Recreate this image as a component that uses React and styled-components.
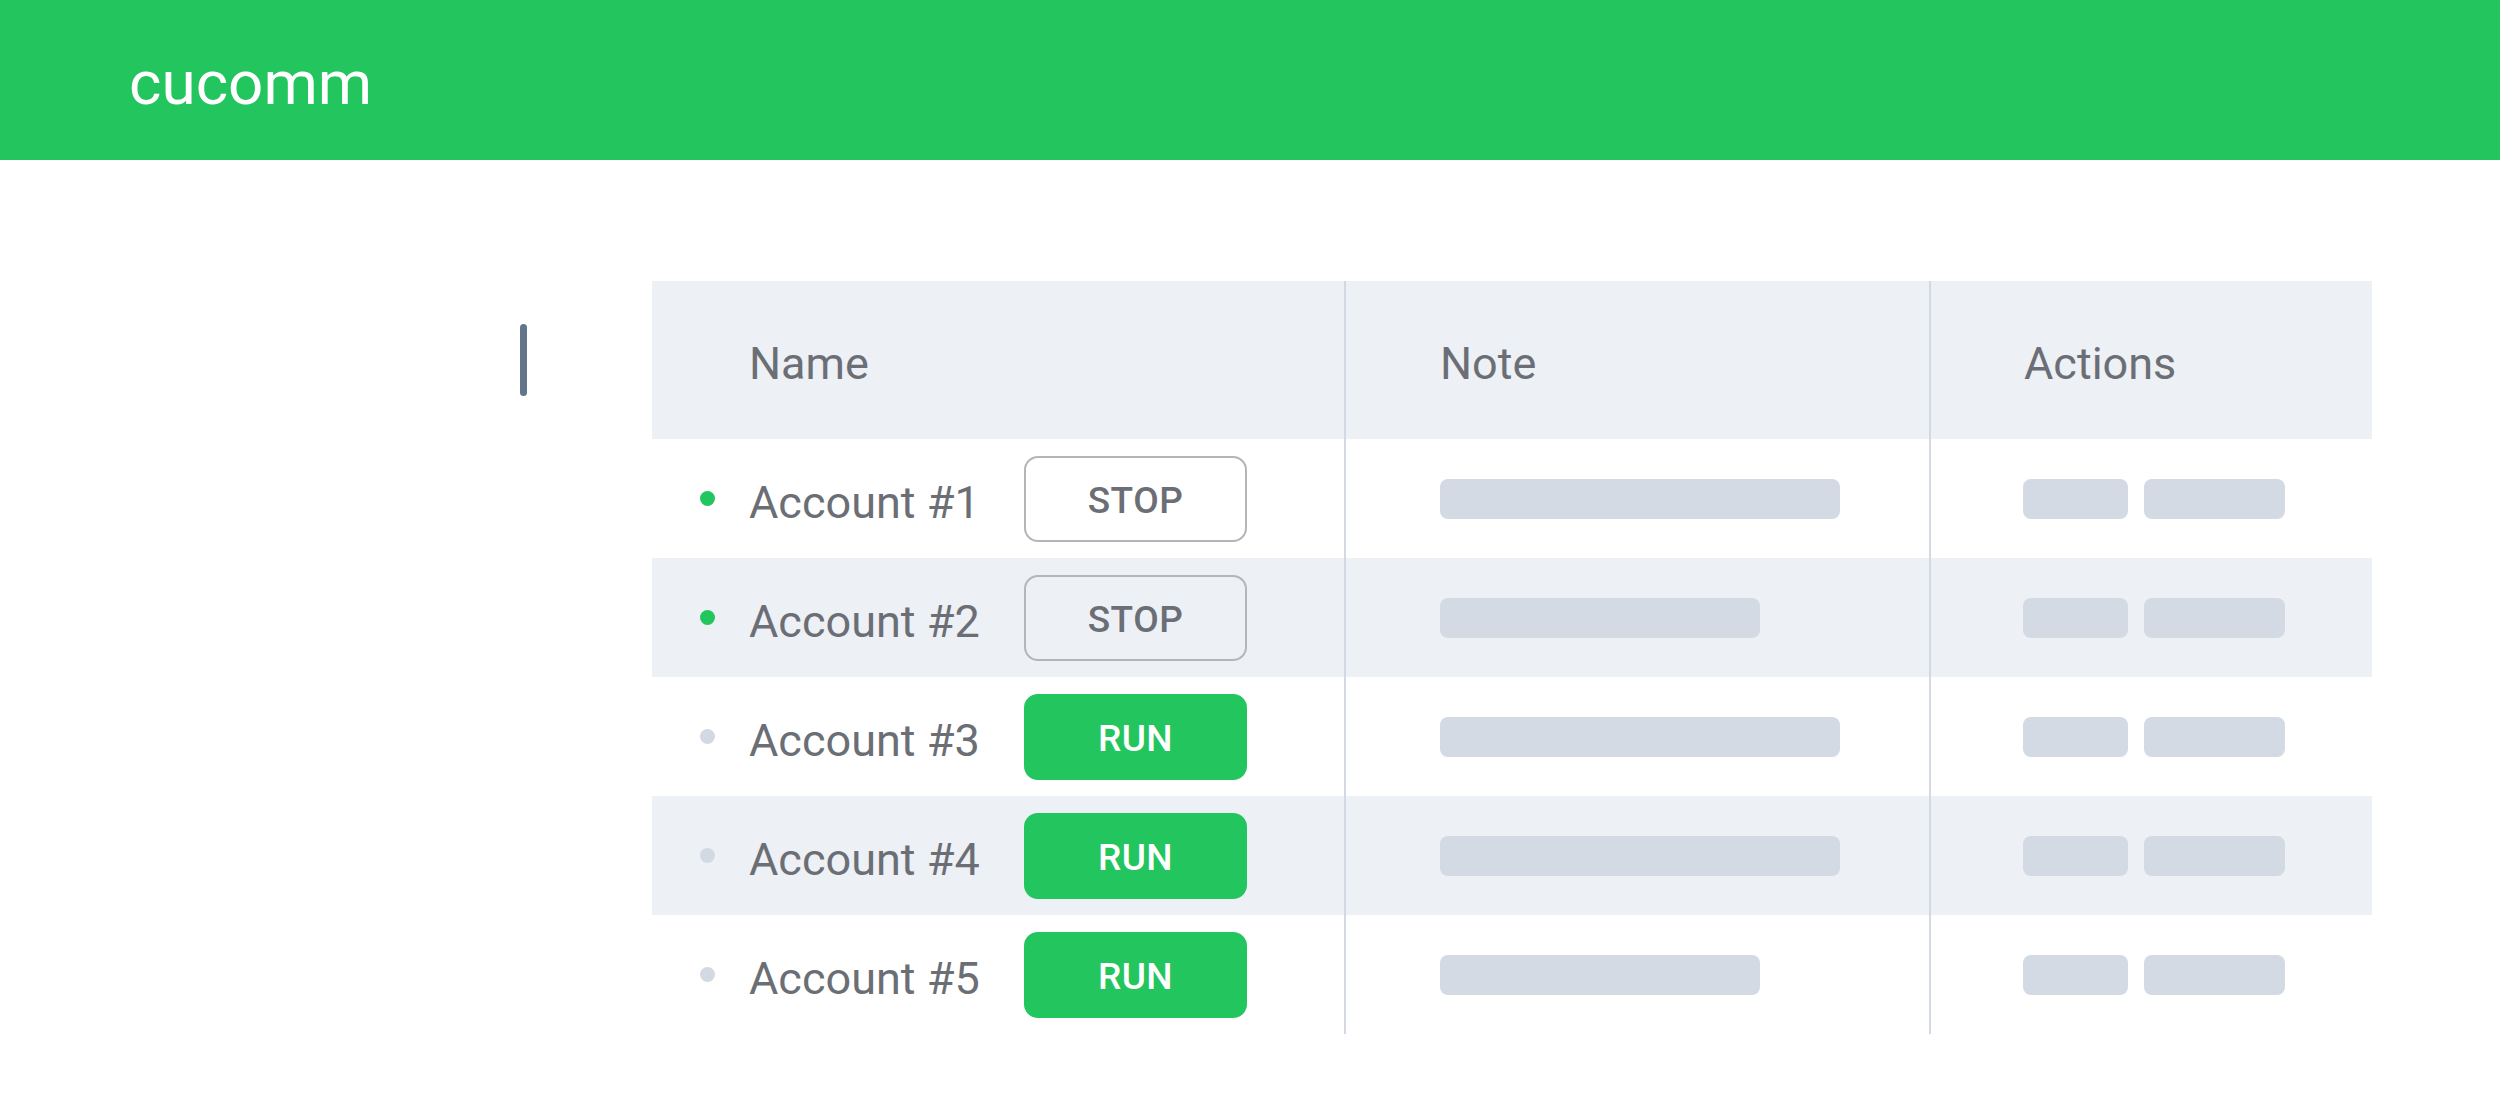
import React from "react";
import styled, { createGlobalStyle } from "styled-components";

const GlobalStyle = createGlobalStyle`
  html, body { margin: 0; padding: 0; background: #ffffff; }
  body { font-family: Roboto, "Noto Sans", Arial, sans-serif; }
  * { box-sizing: border-box; }
`;

const TopBar = styled.header`
  height: 160px;
  background: #22c55e;
  display: flex;
  align-items: center;
  padding-left: 129px;
`;

const Brand = styled.div`
  color: #ffffff;
  font-family: Roboto, sans-serif;
  font-size: 62px;
  font-weight: 400;
  line-height: 1;
  margin-top: 6px;
`;

const Main = styled.main`
  display: flex;
  align-items: flex-start;
  gap: 125px;
  padding: 121px 0 0 520px;
`;

const SideMark = styled.div`
  width: 7px;
  height: 72px;
  margin-top: 43px;
  border-radius: 4px;
  background: #64748b;
`;

const Table = styled.div`
  width: 1720px;
  display: flex;
  flex-direction: column;
`;

const Row = styled.div`
  display: grid;
  grid-template-columns: 692px 585px 443px;
  height: ${(p) => (p.$head ? "158px" : "119px")};
  background: ${(p) => (p.$shaded ? "#edf0f5" : "#ffffff")};
`;

const Cell = styled.div`
  display: flex;
  align-items: center;
  padding-left: ${(p) => p.$pad || "94px"};
  border-left: ${(p) => (p.$first ? "none" : "2px solid #d2d9e2")};
`;

const HeadCell = styled(Cell)`
  padding-top: 6px;
  color: #6b6f75;
  font-size: 45px;
  font-weight: 400;
`;

const Dot = styled.span`
  width: 15px;
  height: 15px;
  border-radius: 50%;
  flex: none;
  margin-right: 34px;
  background: ${(p) => (p.$on ? "#22c55e" : "#d3d9e2")};
`;

const AccountName = styled.span`
  width: 275px;
  flex: none;
  color: #6b6f75;
  font-size: 45px;
  font-weight: 400;
  white-space: nowrap;
  margin-top: 8px;
`;

const ToggleButton = styled.button`
  width: 223px;
  height: 86px;
  border-radius: 14px;
  font-family: Roboto, sans-serif;
  font-size: 37px;
  font-weight: 500;
  letter-spacing: 0.5px;
  cursor: pointer;
  padding: 4px 0 0;
  border: 2px solid ${(p) => (p.$running ? "#b3b5b9" : "#22c55e")};
  background: ${(p) => (p.$running ? "transparent" : "#22c55e")};
  color: ${(p) => (p.$running ? "#6b6f75" : "#ffffff")};
`;

const Placeholder = styled.div`
  height: 40px;
  border-radius: 8px;
  background: #d3dae4;
  flex: none;
`;

const NoteBar = styled(Placeholder)`
  width: ${(p) => (p.$short ? "320px" : "400px")};
`;

const ActionGroup = styled.div`
  display: flex;
  gap: 16px;
`;

const ActionChip = styled(Placeholder)`
  width: ${(p) => (p.$wide ? "141px" : "105px")};
`;

const accounts = [
  { name: "Account #1", running: true, shortNote: false },
  { name: "Account #2", running: true, shortNote: true },
  { name: "Account #3", running: false, shortNote: false },
  { name: "Account #4", running: false, shortNote: false },
  { name: "Account #5", running: false, shortNote: true },
];

export default function App() {
  return (
    <>
      <GlobalStyle />
      <TopBar>
        <Brand>cucomm</Brand>
      </TopBar>
      <Main>
        <SideMark />
        <Table>
          <Row $head $shaded>
            <HeadCell $first $pad="97px">Name</HeadCell>
            <HeadCell>Note</HeadCell>
            <HeadCell $pad="93px">Actions</HeadCell>
          </Row>
          {accounts.map((a, i) => (
            <Row key={a.name} $shaded={i % 2 === 1}>
              <Cell $first $pad="48px">
                <Dot $on={a.running} />
                <AccountName>{a.name}</AccountName>
                <ToggleButton $running={a.running}>
                  {a.running ? "STOP" : "RUN"}
                </ToggleButton>
              </Cell>
              <Cell>
                <NoteBar $short={a.shortNote} />
              </Cell>
              <Cell $pad="92px">
                <ActionGroup>
                  <ActionChip />
                  <ActionChip $wide />
                </ActionGroup>
              </Cell>
            </Row>
          ))}
        </Table>
      </Main>
    </>
  );
}
